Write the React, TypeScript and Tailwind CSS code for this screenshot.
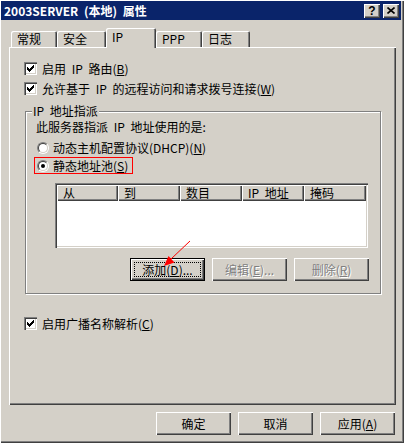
import React from "react";

// classic win2k 3D edges
const raised =
  "shadow-[inset_1px_1px_0_#fff,inset_-1px_-1px_0_#404040,inset_-2px_-2px_0_#808080]";
const sunken =
  "shadow-[inset_1px_1px_0_#808080,inset_2px_2px_0_#404040,inset_-1px_-1px_0_#fff,inset_-2px_-2px_0_#d4d0c8]";

const checkCols = [5, 6, 7, 6, 5, 4, 3];

const CheckBox = () => (
  <span className={`w-[13px] h-[13px] bg-white shrink-0 ${sunken}`}>
    <svg width="13" height="13" shapeRendering="crispEdges">
      {checkCols.map((y, i) => (
        <rect key={i} x={3 + i} y={y} width="1" height="3" fill="#000" />
      ))}
    </svg>
  </span>
);

const Radio = ({ on }: { on?: boolean }) => (
  <span className="relative w-[12px] h-[12px] shrink-0 rounded-full border border-t-[#808080] border-l-[#808080] border-r-white border-b-white">
    <span className="absolute inset-0 rounded-full bg-white border border-t-[#404040] border-l-[#404040] border-r-[#d4d0c8] border-b-[#d4d0c8] flex items-center justify-center">
      {on && <span className="w-[4px] h-[4px] rounded-full bg-black" />}
    </span>
  </span>
);

const Tab = ({
  label,
  width,
  selected,
}: {
  label: string;
  width: string;
  selected?: boolean;
}) => (
  <div
    className={`${width} ${
      selected ? "h-[20px] mb-[-1px] pb-[2px]" : "h-[16px]"
    } bg-[#d4d0c8] rounded-t-[2px] pl-[6px] flex items-center shadow-[inset_1px_1px_0_#fff,inset_-1px_0_0_#404040,inset_-2px_0_0_#808080]`}
  >
    {label}
  </div>
);

const Button = ({
  children,
  width = "w-[75px]",
  disabled,
  focused,
}: {
  children: React.ReactNode;
  width?: string;
  disabled?: boolean;
  focused?: boolean;
}) => {
  if (focused) {
    return (
      <div className={`${width} h-[23px] border border-black bg-[#d4d0c8] ${raised} p-[3px] flex`}>
        <span className="flex-1 border border-dotted border-black flex items-center justify-center">
          {children}
        </span>
      </div>
    );
  }
  return (
    <div
      className={`${width} h-[23px] bg-[#d4d0c8] ${raised} flex items-center justify-center ${
        disabled ? "text-[#808080] [text-shadow:1px_1px_0_#fff]" : ""
      }`}
    >
      {children}
    </div>
  );
};

const columns = [
  { label: "从", w: "w-[61px]" },
  { label: "到", w: "w-[62px]" },
  { label: "数目", w: "w-[62px]" },
  { label: "IP 地址", w: "w-[62px]" },
  { label: "掩码", w: "w-[62px]" },
];

export default function App() {
  return (
    <div className="relative w-[404px] h-[443px] bg-[#d4d0c8] flex flex-col pt-[1px] pl-[1px] pr-[3px] pb-[2px] text-[12px] leading-[14px] text-black font-['Noto_Sans_CJK_SC',sans-serif] [word-spacing:3px] shadow-[inset_1px_1px_0_#fff,inset_-1px_-1px_0_#404040,inset_-2px_-2px_0_#808080] select-none">
      {/* Title bar */}
      <div className="h-[19px] bg-[#0a246a] flex items-center justify-between pl-[3px] pr-[2px]">
        <span className="text-white font-bold text-[12px]">2003SERVER (本地) 属性</span>
        <div className="flex gap-[3px]">
          <div className={`w-[16px] h-[14px] bg-[#d4d0c8] ${raised} flex items-center justify-center font-['Liberation_Sans',sans-serif] font-bold text-[12px] leading-[12px]`}>
            ?
          </div>
          <div className={`w-[16px] h-[14px] bg-[#d4d0c8] ${raised} flex items-center justify-center`}>
            <svg width="8" height="7" viewBox="0 0 8 7">
              <path d="M0.5 0.5L7.5 6.5M7.5 0.5L0.5 6.5" stroke="#000" strokeWidth="1.6" />
            </svg>
          </div>
        </div>
      </div>

      {/* Body */}
      <div className="flex-1 flex flex-col pt-[8px] pl-[8px] pr-[5px] pb-[6px]">
        {/* Tabs */}
        <div className="relative z-10 h-[19px] ml-[2px] flex items-end">
          <Tab label="常规" width="w-[46px]" />
          <Tab label="安全" width="w-[49px]" />
          <Tab label="IP" width="w-[50px]" selected />
          <Tab label="PPP" width="w-[46px]" />
          <Tab label="日志" width="w-[48px]" />
        </div>

        {/* Tab page */}
        <div className="flex-1 flex flex-col pt-[15px] pl-[15px] shadow-[inset_1px_1px_0_#fff,inset_-1px_-1px_0_#404040,inset_-2px_-2px_0_#808080]">
          <div className="h-[13px] flex items-center gap-[5px]">
            <CheckBox />
            <span>
              启用 IP 路由(<u>B</u>)
            </span>
          </div>
          <div className="h-[13px] mt-[7px] flex items-center gap-[5px]">
            <CheckBox />
            <span>
              允许基于 IP 的远程访问和请求拨号连接(<u>W</u>)
            </span>
          </div>

          {/* Group box */}
          <div className="relative mt-[16px] ml-[1px] w-[356px] border border-[#808080] shadow-[1px_1px_0_#fff,inset_1px_1px_0_#fff] pt-[8px] pb-[12px] flex flex-col">
            <span className="absolute -top-[8px] left-[6px] px-[1px] bg-[#d4d0c8]">IP 地址指派</span>
            <div className="h-[14px] pl-[10px]">此服务器指派 IP 地址使用的是:</div>
            <div className="h-[14px] mt-[7px] pl-[11px] flex items-center gap-[4px]">
              <Radio />
              <span>
                动态主机配置协议(DHCP)(<u>N</u>)
              </span>
            </div>
            <div className="h-[17px] w-[99px] mt-[2px] ml-[8px] border border-[#ff0000] pl-[2px] flex items-center gap-[4px]">
              <Radio on />
              <span>
                静态地址池(<u>S</u>)
              </span>
            </div>

            {/* List */}
            <div className={`mt-[9px] ml-[29px] w-[313px] h-[65px] bg-white p-[2px] ${sunken}`}>
              <div className="flex h-[16px]">
                {columns.map((c) => (
                  <div
                    key={c.label}
                    className={`${c.w} h-[16px] bg-[#d4d0c8] pl-[6px] flex items-center ${raised}`}
                  >
                    {c.label}
                  </div>
                ))}
              </div>
            </div>

            <div className="mt-[10px] pr-[11px] flex justify-end gap-[7px]">
              <Button focused>
                添加(<u>D</u>)...
              </Button>
              <Button disabled>
                编辑(<u>E</u>)...
              </Button>
              <Button disabled>
                删除(<u>R</u>)
              </Button>
            </div>
          </div>

          <div className="h-[13px] mt-[23px] flex items-center gap-[5px]">
            <CheckBox />
            <span>
              启用广播名称解析(<u>C</u>)
            </span>
          </div>
        </div>

        {/* Dialog buttons */}
        <div className="mt-[7px] pr-[1px] flex justify-end gap-[7px]">
          <Button>确定</Button>
          <Button>取消</Button>
          <Button>
            应用(<u>A</u>)
          </Button>
        </div>
      </div>

      {/* Red annotation arrow */}
      <svg className="absolute inset-0 pointer-events-none" width="404" height="443">
        <line x1="190" y1="241" x2="171" y2="259" stroke="#ff0000" strokeWidth="1" />
        <polygon points="164,266 174.5,262.5 168.5,256" fill="#ff0000" />
      </svg>
    </div>
  );
}
